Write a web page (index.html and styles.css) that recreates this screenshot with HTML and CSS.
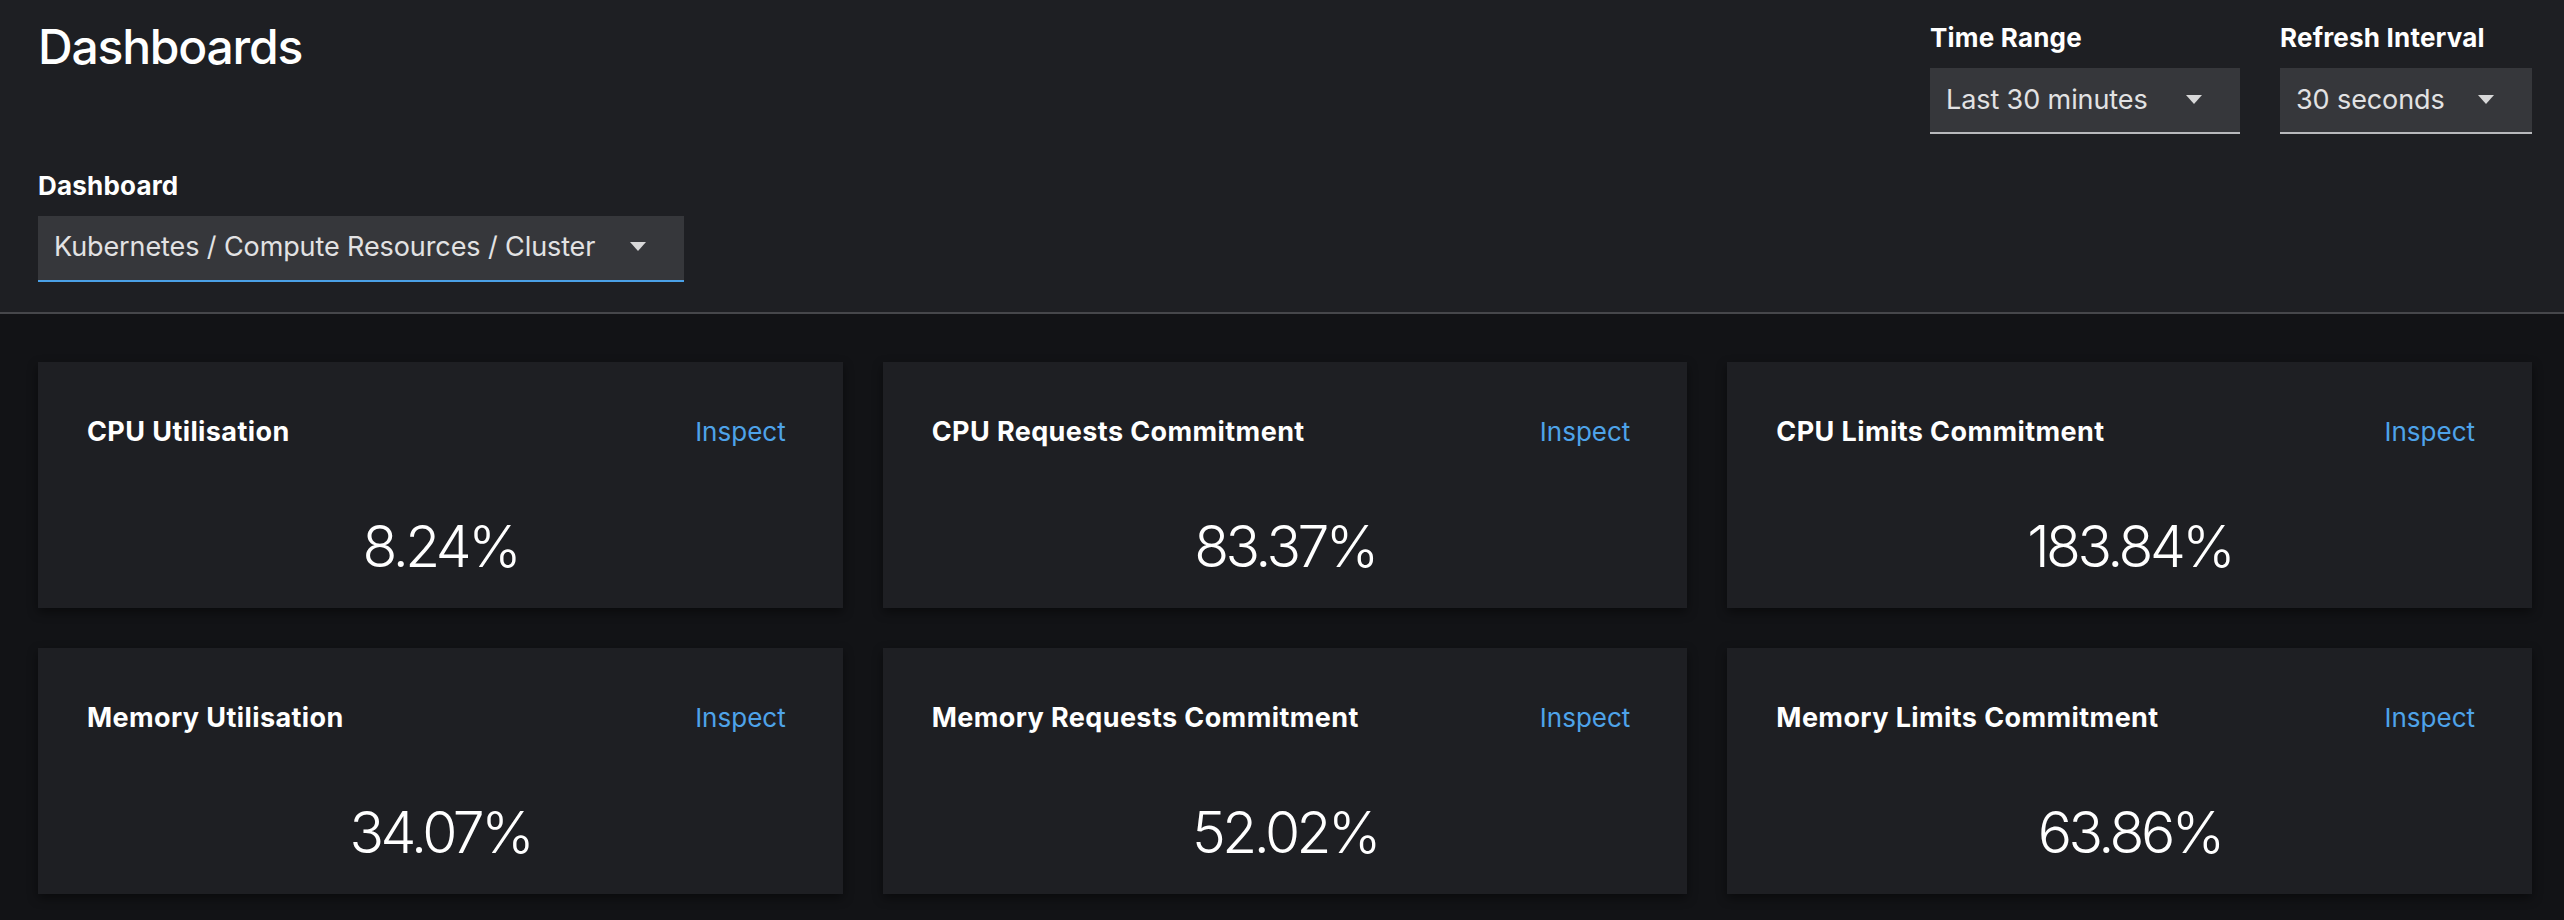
FILE: index.html
```html
<!DOCTYPE html>
<html lang="en">
<head>
<meta charset="utf-8">
<title>Dashboards</title>
<link rel="stylesheet" href="styles.css">
</head>
<body>
<header class="page-header">
  <div class="header-left">
    <h1 class="page-title">Dashboards</h1>
    <div class="field field-dashboard">
      <label class="field-label">Dashboard</label>
      <div class="select select-active">
        <span class="select-text">Kubernetes / Compute Resources / Cluster</span>
        <svg class="caret" viewBox="0 0 16 9" width="16" height="9"><path d="M0 0 H16 L8 9 Z"/></svg>
      </div>
    </div>
  </div>
  <div class="header-right">
    <div class="field">
      <label class="field-label">Time Range</label>
      <div class="select select-time">
        <span class="select-text">Last 30 minutes</span>
        <svg class="caret" viewBox="0 0 16 9" width="16" height="9"><path d="M0 0 H16 L8 9 Z"/></svg>
      </div>
    </div>
    <div class="field">
      <label class="field-label">Refresh Interval</label>
      <div class="select select-refresh">
        <span class="select-text">30 seconds</span>
        <svg class="caret" viewBox="0 0 16 9" width="16" height="9"><path d="M0 0 H16 L8 9 Z"/></svg>
      </div>
    </div>
  </div>
</header>
<main class="content">
  <div class="grid">
    <section class="card">
      <div class="card-head"><h2 class="card-title">CPU Utilisation</h2><a class="inspect">Inspect</a></div>
      <div class="card-value">8.24%</div>
    </section>
    <section class="card">
      <div class="card-head"><h2 class="card-title">CPU Requests Commitment</h2><a class="inspect">Inspect</a></div>
      <div class="card-value">83.37%</div>
    </section>
    <section class="card">
      <div class="card-head"><h2 class="card-title">CPU Limits Commitment</h2><a class="inspect">Inspect</a></div>
      <div class="card-value">183.84%</div>
    </section>
    <section class="card">
      <div class="card-head"><h2 class="card-title">Memory Utilisation</h2><a class="inspect">Inspect</a></div>
      <div class="card-value">34.07%</div>
    </section>
    <section class="card">
      <div class="card-head"><h2 class="card-title">Memory Requests Commitment</h2><a class="inspect">Inspect</a></div>
      <div class="card-value">52.02%</div>
    </section>
    <section class="card">
      <div class="card-head"><h2 class="card-title">Memory Limits Commitment</h2><a class="inspect">Inspect</a></div>
      <div class="card-value">63.86%</div>
    </section>
  </div>
</main>
</body>
</html>
```

FILE: styles.css
```css
* { box-sizing: border-box; }
html, body { margin: 0; padding: 0; }
body {
  background: #121316;
  color: #ffffff;
  font-family: Inter, "Open Sans", "Liberation Sans", sans-serif;
  width: 2564px;
  height: 920px;
  overflow: hidden;
}
.page-header {
  background: #1e1f23;
  display: flex;
  justify-content: space-between;
  align-items: flex-start;
  padding: 18px 32px 30px 38px;
  border-bottom: 2px solid #46474b;
}
.header-left { display: flex; flex-direction: column; }
.page-title {
  margin: 0;
  font-size: 48px;
  line-height: 1.2;
  font-weight: 500;
  letter-spacing: -1.2px;
}
.field-dashboard { margin-top: 90px; }
.field { display: flex; flex-direction: column; }
.field-label {
  font-size: 26px;
  line-height: 40px;
  font-weight: 700;
  margin-bottom: 10px;
  letter-spacing: 0.2px;
}
.header-right { display: flex; gap: 40px; }
.select {
  display: flex;
  align-items: center;
  height: 66px;
  background: #36373b;
  border-bottom: 2px solid #b8b9bc;
  padding: 0 38px 2px 16px;
  color: #e2e2e3;
  font-size: 27px;
}
.select-active { border-bottom-color: #4aa0e6; width: 646px; }
.select-time { width: 310px; }
.select-refresh { width: 252px; }
.select-text { flex: 1; white-space: nowrap; letter-spacing: -0.1px; }
.caret { fill: #d8d8d9; flex: none; }
.content { padding: 48px 32px 0 38px; }
.grid {
  display: grid;
  grid-template-columns: repeat(3, 1fr);
  grid-auto-rows: 246px;
  gap: 40px;
}
.card {
  background: #1e1f23;
  box-shadow: 0 4px 10px rgba(0, 0, 0, 0.45);
  padding: 50px 49px 0 49px;
  display: flex;
  flex-direction: column;
}
.card-head {
  display: flex;
  justify-content: space-between;
  align-items: center;
  height: 39px;
}
.card-title {
  margin: 0;
  font-size: 27px;
  line-height: 39px;
  font-weight: 700;
  letter-spacing: 0.4px;
}
.inspect {
  color: #4ea3e9;
  font-size: 26px;
  line-height: 39px;
  padding-right: 8px;
  cursor: pointer;
}
.card-value {
  margin-top: 60px;
  text-align: center;
  font-size: 57px;
  line-height: 71px;
  font-weight: 300;
  letter-spacing: -3.5px;
}
```
